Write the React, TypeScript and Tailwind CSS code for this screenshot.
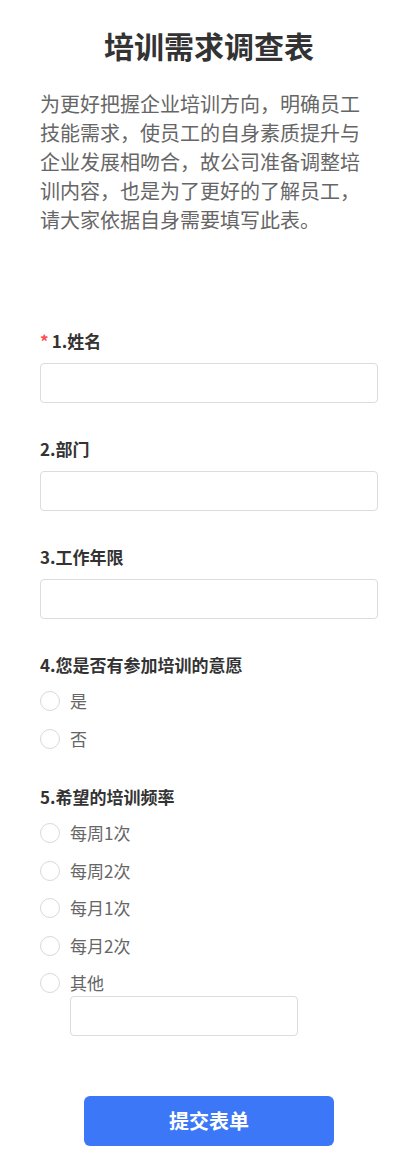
import { useState } from "react";

const font = { fontFamily: '"Noto Sans CJK SC", "Noto Sans", sans-serif' };

function TextField({ className = "" }: { className?: string }) {
  return (
    <input
      type="text"
      className={`block h-[40px] rounded-[4px] border border-[#dcdcdc] bg-white px-3 text-[16px] text-[#333] outline-none ${className}`}
    />
  );
}

function Radio({
  label,
  checked,
  onChange,
}: {
  label: string;
  checked: boolean;
  onChange: () => void;
}) {
  return (
    <label className="flex h-[24px] cursor-pointer items-center" onClick={onChange}>
      <span
        className={`box-border h-[20px] w-[20px] shrink-0 rounded-full border ${
          checked ? "border-[5px] border-[#3b77f6]" : "border-[#d9d9d9]"
        } bg-white`}
      />
      <span className="ml-[10px] text-[17px] leading-[24px] text-[#666]">{label}</span>
    </label>
  );
}

function Question({
  title,
  required,
  children,
}: {
  title: string;
  required?: boolean;
  children: React.ReactNode;
}) {
  return (
    <div>
      <p className="flex items-center text-[17px] font-bold leading-[24px] text-[#333]">
        {required && <span className="mr-[3px] text-[#ff4d4f]">*</span>}
        {title}
      </p>
      {children}
    </div>
  );
}

export default function App() {
  const [willing, setWilling] = useState("");
  const [freq, setFreq] = useState("");
  const freqOptions = ["每周1次", "每周2次", "每月1次", "每月2次"];

  return (
    <div style={font} className="min-h-screen bg-white px-[40px] pt-[25px] pb-[21px]">
      <h1 className="text-center text-[30px] font-bold leading-[40px] text-[#333]">培训需求调查表</h1>
      <p className="mt-[24px] text-[20px] leading-[29px] text-[#666]">
        为更好把握企业培训方向，明确员工技能需求，使员工的自身素质提升与企业发展相吻合，故公司准备调整培训内容，也是为了更好的了解员工，请大家依据自身需要填写此表。
      </p>

      <div className="mt-[95px] flex flex-col gap-[34px]">
        <Question title="1.姓名" required>
          <TextField className="mt-[10px] w-full" />
        </Question>
        <Question title="2.部门">
          <TextField className="mt-[10px] w-full" />
        </Question>
        <Question title="3.工作年限">
          <TextField className="mt-[10px] w-full" />
        </Question>
        <Question title="4.您是否有参加培训的意愿">
          <div className="mt-[12px] flex flex-col gap-[14px]">
            {["是", "否"].map((o) => (
              <Radio key={o} label={o} checked={willing === o} onChange={() => setWilling(o)} />
            ))}
          </div>
        </Question>
        <Question title="5.希望的培训频率">
          <div className="mt-[12px] flex flex-col gap-[13.5px]">
            {freqOptions.map((o) => (
              <Radio key={o} label={o} checked={freq === o} onChange={() => setFreq(o)} />
            ))}
            <div>
              <Radio label="其他" checked={freq === "其他"} onChange={() => setFreq("其他")} />
              <TextField className="ml-[30px] mt-[1px] w-[228px]" />
            </div>
          </div>
        </Question>
      </div>

      <div className="mt-[60px] flex justify-center">
        <button className="h-[50px] w-[250px] rounded-[6px] bg-[#3b77f6] text-[20px] font-bold text-white">
          提交表单
        </button>
      </div>
    </div>
  );
}
